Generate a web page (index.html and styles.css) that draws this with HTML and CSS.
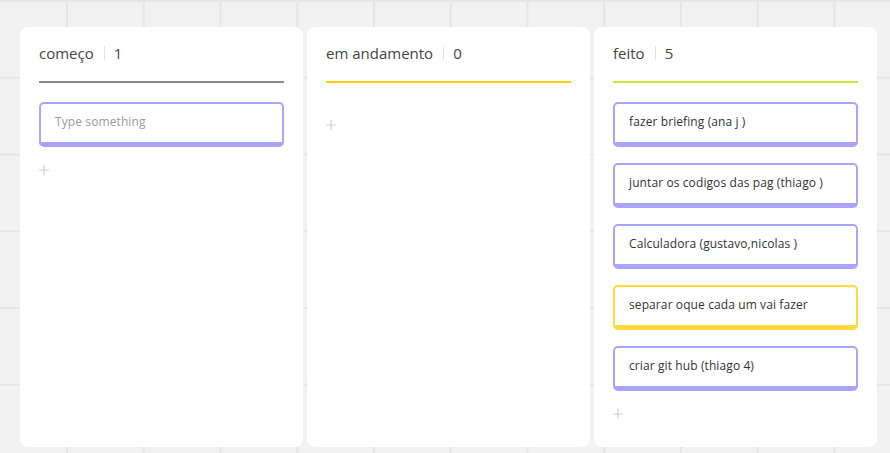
FILE: index.html
```html
<!DOCTYPE html>
<html lang="pt">
<head>
<meta charset="utf-8">
<title>Kanban</title>
<link rel="stylesheet" href="styles.css">
</head>
<body>
<main class="board">
  <section class="column">
    <header class="col-head gray">
      <span class="col-title">começo</span><span class="sep"></span><span class="col-count">1</span>
    </header>
    <div class="cards">
      <div class="card purple placeholder">Type something</div>
    </div>
    <svg class="add" width="10" height="10" viewBox="0 0 10 10"><path d="M5 0V10M0 5H10" stroke="#cfcfcf" stroke-width="1.2" fill="none"/></svg>
  </section>
  <section class="column">
    <header class="col-head yellow">
      <span class="col-title">em andamento</span><span class="sep"></span><span class="col-count">0</span>
    </header>
    <div class="cards"></div>
    <svg class="add" width="10" height="10" viewBox="0 0 10 10"><path d="M5 0V10M0 5H10" stroke="#cfcfcf" stroke-width="1.2" fill="none"/></svg>
  </section>
  <section class="column">
    <header class="col-head lime">
      <span class="col-title">feito</span><span class="sep"></span><span class="col-count">5</span>
    </header>
    <div class="cards">
      <div class="card purple">fazer briefing (ana j )</div>
      <div class="card purple">juntar os codigos das pag (thiago )</div>
      <div class="card purple">Calculadora (gustavo,nicolas )</div>
      <div class="card yellowcard">separar oque cada um vai fazer</div>
      <div class="card purple">criar git hub (thiago 4)</div>
    </div>
    <svg class="add" width="10" height="10" viewBox="0 0 10 10"><path d="M5 0V10M0 5H10" stroke="#cfcfcf" stroke-width="1.2" fill="none"/></svg>
  </section>
</main>
</body>
</html>
```
FILE: styles.css
```css
html, body {
  margin: 0;
  padding: 0;
  height: 100%;
}
body {
  font-family: "Open Sans", "Noto Sans", sans-serif;
  background-color: #f2f2f2;
  background-image:
    linear-gradient(to right, #e6e6e6 2px, transparent 2px),
    linear-gradient(to bottom, #e6e6e6 2px, transparent 2px);
  background-size: 76.75px 76.75px, 76.75px 76.75px;
  background-position: 66px 0, 0 0;
  overflow: hidden;
}
.board {
  display: flex;
  gap: 4px;
  padding: 27px 0 0 20px;
}
.column {
  width: 283px;
  height: 420px;
  box-sizing: border-box;
  background: #fff;
  border-radius: 8px;
  padding: 16px 19px 0;
}
.col-head {
  display: flex;
  align-items: center;
  height: 20px;
  padding-bottom: 18px;
  border-bottom: 2px solid #8a8a8a;
  font-size: 15px;
  line-height: 20px;
  color: #454545;
}
.col-head.gray { border-bottom-color: #8c8c8c; }
.col-head.yellow { border-bottom-color: #ffcc00; }
.col-head.lime { border-bottom-color: #cde635; }
.sep {
  display: inline-block;
  width: 1px;
  height: 14px;
  background: #e2e2e2;
  margin: 0 9px 0 10px;
}
.cards {
  display: flex;
  flex-direction: column;
  gap: 16px;
  padding-top: 19px;
}
.card {
  border: 2px solid #aaa3ff;
  border-bottom-width: 5px;
  border-radius: 5px;
  padding: 9px 14px 11px;
  font-size: 12px;
  letter-spacing: 0.1px;
  line-height: 18px;
  color: #333;
}
.card.purple { border-color: #aaa3ff; }
.card.yellowcard { border-color: #ffd93d; }
.card.placeholder { color: #9a9a9a; }
.add {
  display: block;
  margin-top: 18px;
}
```
